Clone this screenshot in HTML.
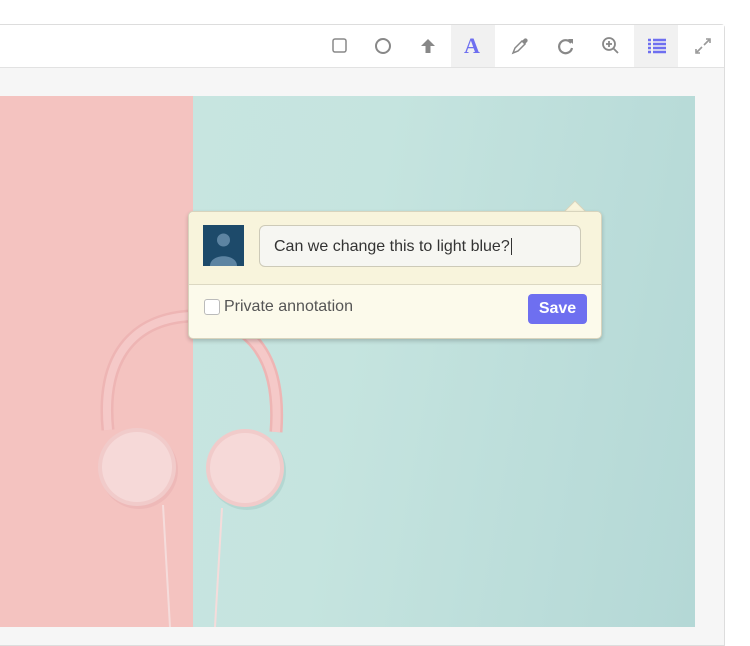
<!DOCTYPE html>
<html><head><style>
body{margin:0;width:750px;height:627px;overflow:hidden;background:#fff;font-family:"Liberation Sans",sans-serif;position:relative}
.panel{position:absolute;left:-1px;top:24px;width:724px;height:620px;border:1px solid #ddd;border-radius:0 4px 0 0;background:#f6f6f6}
.tb{position:absolute;left:0;top:0;width:724px;height:42px;background:#fff;border-bottom:1px solid #e2e2e2}
.hl{position:absolute;top:0;height:42px;background:#f1f1f1}
.ic{position:absolute;top:10px}
.img{position:absolute;left:0;top:96px;width:695px;height:531px;background:linear-gradient(100deg,#c9e6e1,#c5e4df 50%,#b4d8d6)}
.pink{position:absolute;left:0;top:96px;width:193px;height:531px;background:#f4c3c0}
.pop{position:absolute;left:188px;top:211px;width:412px;height:126px;background:#fcfaeb;border:1px solid #d8d4bd;border-radius:5px;box-shadow:0 2px 4px rgba(0,0,0,.2)}
.top{position:absolute;left:0;top:0;width:412px;height:72px;background:#f8f4dc;border-bottom:1px solid #dcd8c2;border-radius:5px 5px 0 0}
.inp{position:absolute;left:70px;top:13px;width:322px;height:42px;border:1px solid #cdcab8;border-radius:6px;background:#f6f6f2;font-size:16px;color:#333;line-height:42px;padding-left:14px;box-sizing:border-box}
.av{position:absolute;left:14px;top:13px;width:41px;height:41px;background:#1d4a6a;overflow:hidden}
.cb{position:absolute;left:15px;top:87px;width:14px;height:14px;border:1px solid #bbb;border-radius:3px;background:#fff}
.lab{position:absolute;left:35px;top:86px;font-size:16px;color:#555}
.save{position:absolute;left:339px;top:82px;width:59px;height:30px;background:#6e6ff0;border-radius:4px;color:#fff;font-weight:bold;font-size:16px;text-align:center;line-height:30px}
</style></head><body>
<div class="panel">
<div class="tb">
<div class="hl" style="left:451px;width:44px"></div>
<div class="hl" style="left:634px;width:44px"></div>
<svg class="ic" style="left:329px" width="22" height="22"><rect x="4" y="4" width="13" height="13" rx="2" fill="none" stroke="#888" stroke-width="1.5"/></svg>
<svg class="ic" style="left:372px" width="22" height="22"><circle cx="11" cy="11" r="7" fill="none" stroke="#888" stroke-width="2"/></svg>
<svg class="ic" style="left:417px" width="22" height="22"><path d="M11 4L4 11h4.5v7h5v-7H18z" fill="#888"/></svg>
<div class="ic" style="left:464px;top:8px;font-family:'Liberation Serif',serif;font-weight:bold;font-size:22px;color:#6e6ff0">A</div>
<svg class="ic" style="left:509px" width="22" height="22"><path d="M4 18l2-5 7-7 3 3-7 7z" fill="none" stroke="#888" stroke-width="1.5"/><path d="M13 6l2-2a2 2 0 013 3l-2 2z" fill="#888"/></svg>
<svg class="ic" style="left:555px" width="22" height="22"><path d="M16 8A6.5 6.5 0 1 0 17 13" fill="none" stroke="#888" stroke-width="2.2"/><path d="M13 4l5 0 0 5z" fill="#888"/></svg>
<svg class="ic" style="left:600px" width="22" height="22"><circle cx="9" cy="9" r="6" fill="none" stroke="#888" stroke-width="1.8"/><path d="M13 13l5 5M9 6v6M6 9h6" stroke="#888" stroke-width="1.8"/></svg>
<svg class="ic" style="left:646px" width="22" height="22"><path d="M2 5h3M7 5h13M2 9h3M7 9h13M2 13h3M7 13h13M2 17h3M7 17h13" stroke="#6e6ff0" stroke-width="2.4"/></svg>
<svg class="ic" style="left:692px" width="22" height="22"><path d="M12 10l5-5M14 4h4v4M10 12l-5 5M4 14v4h4" stroke="#999" stroke-width="1.6" fill="none"/></svg>
</div>
</div>
<div class="img"></div>
<div class="pink"></div>
<svg style="position:absolute;left:0;top:96px" width="695" height="531">
<g transform="translate(0,-96)">
<path d="M108 430 C100 350 140 318 192 316 C245 318 282 350 276 432" fill="none" stroke="#eeb5b4" stroke-width="13"/>
<path d="M108 430 C100 350 140 318 192 316 C245 318 282 350 276 432" fill="none" stroke="#f5c9c8" stroke-width="8"/>
<path d="M163 505 L170 627 M222 508 L215 627" stroke="#f5dcdb" stroke-width="2"/>
<circle cx="139" cy="470" r="39" fill="#e9b3b2" opacity=".6"/>
<circle cx="247" cy="471" r="39" fill="#a8cfca" opacity=".6"/>
<circle cx="137" cy="467" r="39" fill="#f1cbca"/><circle cx="137" cy="467" r="35" fill="#f6d9d8"/>
<circle cx="245" cy="468" r="39" fill="#f1cbca"/><circle cx="245" cy="468" r="35" fill="#f6d9d8"/>
</g></svg>
<svg style="position:absolute;left:563px;top:200px" width="26" height="13"><path d="M0 13L12 1L24 13" fill="#f8f4dc" stroke="#d8d4bd"/></svg>
<div class="pop">
<div class="top">
<div class="av"><svg width="41" height="41"><circle cx="20.5" cy="15" r="6.5" fill="#5d84a2"/><path d="M7 41 C7 28 34 28 34 41z" fill="#5d84a2"/></svg></div>
<div class="inp">Can we change this to light blue?<span style="border-left:1px solid #333;margin-left:1px"></span></div>
</div>
<div class="cb"></div><div class="lab">Private annotation</div>
<div class="save">Save</div>
</div>
</body></html>
